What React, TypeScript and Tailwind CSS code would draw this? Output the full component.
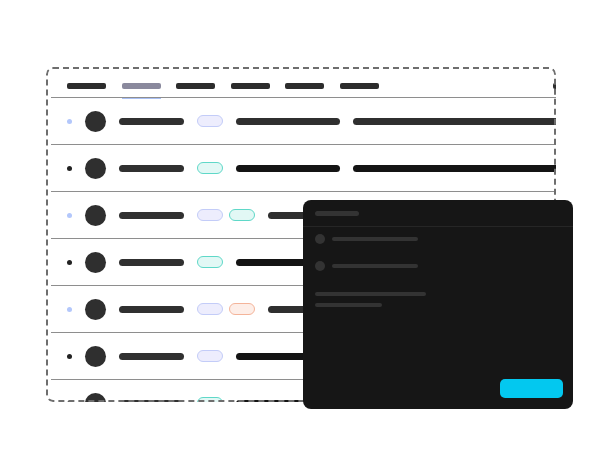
import React from "react";

type Pill = "blue" | "teal" | "orange";
type Row = { dot: "blue" | "dark"; pills: Pill[] };

const rows: Row[] = [
  { dot: "blue", pills: ["blue"] },
  { dot: "dark", pills: ["teal"] },
  { dot: "blue", pills: ["blue", "teal"] },
  { dot: "dark", pills: ["teal"] },
  { dot: "blue", pills: ["blue", "orange"] },
  { dot: "dark", pills: ["blue"] },
  { dot: "dark", pills: ["teal"] },
];

const pillClass: Record<Pill, string> = {
  blue: "bg-[#ededfd] border-[#c3ccf8]",
  teal: "bg-[#e2f8f5] border-[#5fd8c8]",
  orange: "bg-[#fdeee8] border-[#f4b49a]",
};

function TableRow({ row }: { row: Row }) {
  const bar = row.dot === "blue" ? "bg-[#2f2f2f]" : "bg-[#141414]";
  return (
    <div className="h-[47px] shrink-0 border-b border-[#8e8e8e] flex items-center pl-[16px] gap-[13px]">
      <div
        className={
          "w-[5px] h-[5px] rounded-full shrink-0 " +
          (row.dot === "blue" ? "bg-[#b3c7fb]" : "bg-[#222222]")
        }
      />
      <div className="w-[21px] h-[21px] rounded-full bg-[#2f2f2f] shrink-0" />
      <div className="w-[65px] h-[7px] rounded-full bg-[#303030] shrink-0" />
      <div className="flex gap-[6px] shrink-0">
        {row.pills.map((p, i) => (
          <div
            key={i}
            className={"w-[26px] h-[12px] rounded-full border " + pillClass[p]}
          />
        ))}
      </div>
      <div className={"w-[104px] h-[7px] rounded-full shrink-0 " + bar} />
      <div className={"w-[260px] h-[7px] rounded-full shrink-0 " + bar} />
    </div>
  );
}

export default function App() {
  const headers = [0, 1, 2, 3, 4, 5];
  return (
    <div
      className="relative w-[600px] h-[469px] bg-white pl-[46px] pt-[67px]"
      style={{ fontFamily: "Inter, 'Liberation Sans', sans-serif" }}
    >
      <div className="relative w-[510px] h-[335px] rounded-[7px] overflow-hidden">
        <div className="flex flex-col pl-[5px]">
          <div className="relative h-[31px] shrink-0 border-b border-[#8e8e8e] flex pl-[16px] pt-[16px] gap-[15.5px]">
            {headers.map((i) => (
              <div key={i} className="relative w-[39px] shrink-0">
                <div
                  className={
                    "h-[6px] rounded-[2px] " +
                    (i === 1 ? "bg-[#8a899d]" : "bg-[#2c2c2c]")
                  }
                />
                {i === 1 && (
                  <div className="absolute left-0 right-0 top-[15px] h-[1px] bg-[#a8bff5]" />
                )}
              </div>
            ))}
            <div className="ml-auto mr-[-40px] w-[43px] h-[6px] rounded-[2px] bg-[#2c2c2c] shrink-0" />
          </div>
          {rows.map((r, i) => (
            <TableRow key={i} row={r} />
          ))}
        </div>
        <div className="absolute inset-0 rounded-[7px] border-2 border-dashed border-[#6e6e6e] pointer-events-none" />
      </div>

      <div className="absolute left-[303px] top-[200px] w-[270px] h-[209px] rounded-[8px] bg-[#161616] flex flex-col">
        <div className="h-[27px] shrink-0 border-b border-[#262626] flex items-center px-[12px]">
          <div className="w-[44px] h-[5px] rounded-full bg-[#333333]" />
        </div>
        <div className="px-[12px] flex flex-col">
          <div className="mt-[7px] flex items-center gap-[7px]">
            <div className="w-[10px] h-[10px] rounded-full bg-[#333333]" />
            <div className="w-[86px] h-[4px] rounded-full bg-[#333333]" />
          </div>
          <div className="mt-[17px] flex items-center gap-[7px]">
            <div className="w-[10px] h-[10px] rounded-full bg-[#333333]" />
            <div className="w-[86px] h-[4px] rounded-full bg-[#333333]" />
          </div>
          <div className="mt-[21px] w-[111px] h-[4px] rounded-full bg-[#333333]" />
          <div className="mt-[7px] w-[67px] h-[4px] rounded-full bg-[#333333]" />
        </div>
        <div className="mt-auto self-end mr-[10px] mb-[11px] w-[63px] h-[19px] rounded-[5px] bg-[#03c8ef]" />
      </div>
    </div>
  );
}
